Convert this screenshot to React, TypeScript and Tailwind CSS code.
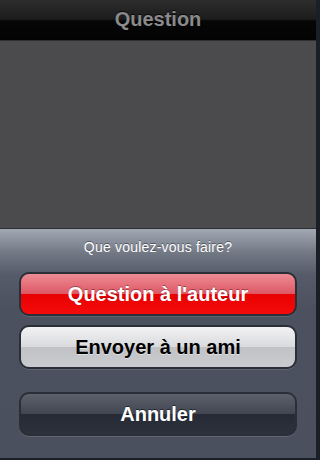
import React from 'react';

function SheetButton({ label, variant }: { label: string; variant: 'red' | 'light' | 'dark' }) {
  const styles = {
    red: 'bg-[linear-gradient(#ee8c95,#dd5764_50%,#e80000_50%,#f50b0b)] text-white [text-shadow:0_-1px_0_rgba(0,0,0,0.35)]',
    light: 'bg-[linear-gradient(#f2f2f4,#d9dadd_50%,#c1c2c6_50%,#cacbce)] text-black [text-shadow:0_1px_0_rgba(255,255,255,0.5)]',
    dark: 'bg-[linear-gradient(#5c616c,#40454f_50%,#252a35_50%,#2c313c)] text-white [text-shadow:0_-1px_0_rgba(0,0,0,0.5)]',
  }[variant];
  return (
    <button
      className={`w-[278px] h-[44px] rounded-[10px] border-2 border-[#2a2e36] shadow-[0_1px_0_rgba(255,255,255,0.12)] text-[20px] font-bold flex items-center justify-center ${styles}`}
    >
      {label}
    </button>
  );
}

export default function App() {
  return (
    <div className="w-[320px] h-[460px] bg-[#1a1f27] overflow-hidden font-['Liberation_Sans',Arial,sans-serif]">
      <div className="w-[316px] h-[458px] flex flex-col">
        <div className="h-[41px] border-b border-[#303032] bg-[linear-gradient(#2d2d2d,#1c1c1c_48%,#060606_52%,#030303)] flex items-center justify-center">
          <span className="text-[20px] font-bold text-[#8a8a8c] [text-shadow:0_-1px_0_rgba(0,0,0,0.8)] -mt-[3px]">Question</span>
        </div>
        <div className="flex-1 bg-[#4b4b4d]" />
        <div className="h-[230px] border-t border-[#2b2e34] bg-[linear-gradient(#a3a9b3,#737a86_10%,#555b68_20%,#4b515e_35%,#4a505d)] flex flex-col items-center">
          <div className="mt-[9px] h-[18px] text-[14px] leading-[18px] text-white tracking-[0.2px] [text-shadow:0_-1px_0_rgba(0,0,0,0.4)]">
            Que voulez-vous faire?
          </div>
          <div className="mt-[16px]">
            <SheetButton label="Question à l'auteur" variant="red" />
          </div>
          <div className="mt-[9px]">
            <SheetButton label="Envoyer à un ami" variant="light" />
          </div>
          <div className="mt-[23px]">
            <SheetButton label="Annuler" variant="dark" />
          </div>
        </div>
      </div>
    </div>
  );
}
